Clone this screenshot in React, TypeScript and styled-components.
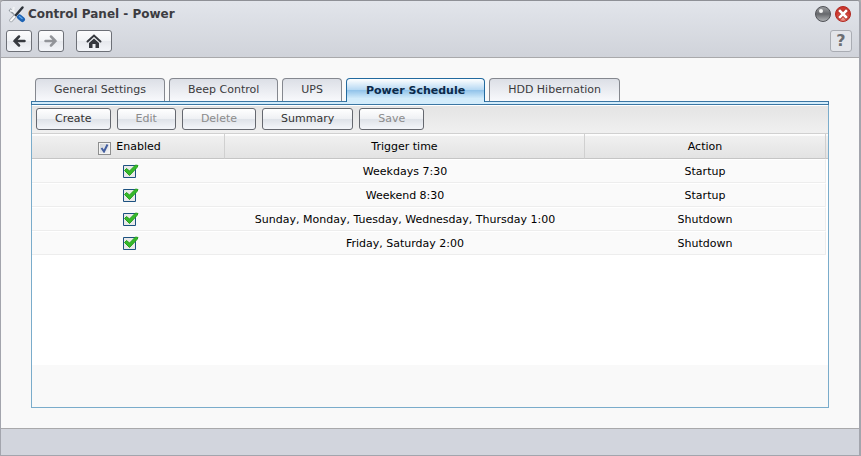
import React, { useState } from "react";
import styled, { createGlobalStyle, css } from "styled-components";

const GlobalStyle = createGlobalStyle`
  *, *::before, *::after { box-sizing: border-box; }
  body { margin: 0; background: #b0b0b2; }
  body, button, input, table { font-family: Verdana, "DejaVu Sans", sans-serif; }
`;

const Window = styled.div`
  display: flex;
  flex-direction: column;
  min-height: 100vh;
  border: 1px solid #a3a5ad;
  border-right-width: 2px;
  border-top-color: #8e9096;
  border-radius: 4px 4px 0 0;
  background: #f9f9f9;
  color: #333;
  overflow: hidden;
`;

const WindowHeader = styled.header`
  background: linear-gradient(#e2e5eb, #d0d3da);
  border-bottom: 1px solid #a9a9ab;
  height: 57px;
`;

const TitleBar = styled.div`
  display: flex;
  align-items: center;
  gap: 2px;
  height: 25px;
  padding: 0 7px;
`;

const Title = styled.h1`
  flex: 1;
  margin: 0;
  font-size: 12px;
  line-height: 16px;
  font-weight: bold;
  color: #3c3c41;
`;

const WindowButton = styled.button`
  display: flex;
  padding: 0;
  border: 0;
  background: none;
`;

const NavBar = styled.nav`
  display: flex;
  align-items: center;
  padding: 4px 7px 0 5px;
`;

const NavButton = styled.button<{ $wide?: boolean; $faint?: boolean }>`
  display: flex;
  align-items: center;
  justify-content: center;
  width: ${(p) => (p.$wide ? 36 : 26)}px;
  height: 22px;
  margin-right: ${(p) => (p.$wide ? 0 : 6)}px;
  padding: 0;
  border: 1px solid #6d7077;
  border-radius: 3px;
  background: linear-gradient(#fcfcfd, #f1f3f6 50%, #e6e8ed 50%, #f3f5f9);
  ${(p) => p.$wide && css`margin-left: 6px;`}
  ${(p) =>
    p.$faint &&
    css`
      width: 22px;
      margin: 0 0 0 auto;
      border-color: #a9acb3;
      background: #e3e5ea;
      color: #6c6e73;
      font: bold 16px/20px "DejaVu Sans", sans-serif;
    `}
`;

const Content = styled.main`
  display: flex;
  flex: 1;
  flex-direction: column;
  padding: 20px 30px;
`;

const TabList = styled.div`
  display: flex;
  gap: 4px;
  padding: 0 4px;
`;

const Tab = styled.button<{ $active: boolean }>`
  height: 23px;
  padding: 0 18px;
  border: 1px solid #85888f;
  border-bottom: 0;
  border-radius: 4px 4px 0 0;
  background: linear-gradient(#dcdfe6, #f8f9fc);
  color: #3a3a3c;
  font-size: 11px;
  line-height: 22px;
  white-space: nowrap;
  ${(p) =>
    p.$active &&
    css`
      z-index: 1;
      height: 24px;
      margin-bottom: -1px;
      padding: 0 19px;
      border-color: #226a9f;
      background: linear-gradient(#fff, #b5d8f3 48%, #93c4ea 50%, #d3ecfb 85%);
      color: #0b2a4a;
      font-weight: bold;
    `}
`;

const TabStrip = styled.div`
  height: 4px;
  border: 1px solid #3a76a3;
  background: #d3ecfb;
`;

const Panel = styled.section`
  display: flex;
  flex: 1;
  flex-direction: column;
  border: 1px solid #7aaccb;
  border-top: 0;
  background: #fff;
`;

const Toolbar = styled.div`
  display: flex;
  gap: 6px;
  padding: 2px 4px 3px;
  border-top: 1px solid #fff;
  border-bottom: 1px solid #d0d0d0;
  background: linear-gradient(#e4e4e4, #f0f0f0);
`;

const ToolButton = styled.button`
  height: 22px;
  padding: 0 18px;
  border: 1px solid #65686f;
  border-radius: 3px;
  background: linear-gradient(#fff, #eff1f4 48%, #dfe3e9 52%, #f4f6fa);
  color: #333;
  font-size: 11px;
  line-height: 20px;
  &:disabled { color: #8b8b8b; }
`;

const Schedule = styled.table`
  width: 100%;
  border-collapse: separate;
  border-spacing: 0;
  table-layout: fixed;
  color: #000;
  font-size: 11px;
  line-height: 14px;
  text-align: center;
`;

const Column = styled.col<{ $width?: number }>`
  width: ${(p) => (p.$width ? `${p.$width}px` : "auto")};
`;

const HeadCell = styled.th`
  height: 25px;
  padding: 2px 0 0;
  border-right: 1px solid #d0d0d0;
  border-bottom: 1px solid #c5c5c5;
  background: linear-gradient(#fff 0, #f9f9f9 2px, #f0f0f0 2px, #e3e3e3);
  font-weight: normal;
  &:first-child { padding-left: 3px; }
`;

const Gutter = styled(HeadCell)`
  border-right: 0;
`;

const Cell = styled.td`
  height: 24px;
  padding: 2px 0 0;
  border-top: 1px solid #fff;
  border-bottom: 1px solid #ededed;
  background: #fafafa;
  &:first-child { padding: 0 0 0 4px; }
  &:nth-child(3) { border-right: 1px solid #ededed; }
`;

const CheckLabel = styled.label`
  display: flex;
  align-items: center;
  justify-content: center;
  gap: 5px;
`;

const HeadCheck = styled.input`
  appearance: none;
  width: 13px;
  height: 13px;
  margin: 2px 0 0;
  border: 1px solid #8e8f8f;
  background: linear-gradient(135deg, #cdd1d6, #f8f8f8);
  box-shadow: inset 0 0 0 1px #f4f4f4;
  &:checked {
    background: url("data:image/svg+xml,%3Csvg xmlns='http://www.w3.org/2000/svg' viewBox='0 0 11 11'%3E%3Cpath d='M2.500 5l2.500 3.500L8.500 1.500' fill='none' stroke='%23445fa0' stroke-width='2'/%3E%3C/svg%3E"),
      linear-gradient(135deg, #cdd1d6, #f8f8f8);
  }
`;

const RowCheck = styled.input`
  appearance: none;
  display: block;
  width: 16px;
  height: 14px;
  margin: 0 auto;
  background: url("data:image/svg+xml,%3Csvg xmlns='http://www.w3.org/2000/svg' width='16' height='14'%3E%3Cpath d='M.5 1.500h12v12H.5z' fill='%23e9e9e9' stroke='%231c5180'/%3E%3C/svg%3E");
  &:checked {
    background: url("data:image/svg+xml,%3Csvg xmlns='http://www.w3.org/2000/svg' width='16' height='14'%3E%3Cpath d='M.5 1.500h12v12H.5z' fill='%23e9e9e9' stroke='%231c5180'/%3E%3Cpath d='M1.500 6.500L3.500 4.500 6.500 7 12.500 1 15 1.500 14 3.500 6.500 11.500z' fill='%2336b92a' stroke='%2325a01d'/%3E%3C/svg%3E");
  }
`;

const PanelFooter = styled.div`
  height: 42px;
  margin-top: auto;
  background: #f9f9f9;
`;

const StatusBar = styled.footer`
  height: 27px;
  border-top: 1px solid #a9a9ab;
  background: #d2d5dd;
`;

const ToolsIcon = () => (
  <svg width="18" height="18" viewBox="0 0 18 18" aria-hidden="true">
    <path d="M3 15.500L8 10" stroke="#9da3a9" strokeWidth="3.500" strokeLinecap="round" />
    <path d="M3 15.500L8 10" stroke="#f8f9fa" strokeWidth="2" strokeLinecap="round" />
    <path d="M1.500 4.500L4.500 7 12 13" fill="none" stroke="#959ca3" strokeWidth="3" />
    <path d="M2 5.500L5 6 6 2M5 6l6 6" fill="none" stroke="#f0f2f4" strokeWidth="2" />
    <path d="M8 10L14.500 2.500" stroke="#2d333a" strokeWidth="2.500" strokeLinecap="round" />
    <path d="M11.500 12l3 2.500" stroke="#1d63b4" strokeWidth="5" strokeLinecap="round" />
    <path d="M11.500 11.500l2.500 2" stroke="#5ca6ea" strokeWidth="1.500" strokeLinecap="round" />
  </svg>
);

const ArrowIcon = ({ color, back }: { color: string; back?: boolean }) => (
  <svg width="14" height="12" viewBox="0 0 14 12" aria-hidden="true">
    <path
      d={back ? "M12.500 6H2.500M7 1.500L2.500 6 7 10.500" : "M1.500 6h10M7 1.500L11.500 6 7 10.500"}
      fill="none"
      stroke={color}
      strokeWidth="2.500"
      strokeLinecap="round"
    />
  </svg>
);

const HomeIcon = () => (
  <svg width="16" height="14" viewBox="0 0 16 14" aria-hidden="true">
    <path d="M1.500 7.500L8 1.500l6.500 6" fill="none" stroke="#36393f" strokeWidth="2" strokeLinecap="round" />
    <path d="M3 9l5-4.500L13 9v5H9.500v-4h-3v4H3z" fill="#36393f" />
  </svg>
);

const MinimizeIcon = () => (
  <svg width="18" height="18" viewBox="0 0 18 18" aria-hidden="true">
    <defs>
      <linearGradient id="ball" x2="0" y2="1">
        <stop stopColor="#a0a2a5" />
        <stop offset=".5" stopColor="#66686c" />
        <stop offset="1" stopColor="#b5b7ba" />
      </linearGradient>
    </defs>
    <circle cx="9" cy="9" r="7.500" fill="url(#ball)" stroke="#505257" />
    <circle cx="7" cy="6" r="2" fill="#f5f5f5" />
  </svg>
);

const CloseIcon = () => (
  <svg width="18" height="18" viewBox="0 0 18 18" aria-hidden="true">
    <defs>
      <radialGradient id="close" cy=".8">
        <stop stopColor="#f0a093" />
        <stop offset="1" stopColor="#cf382f" />
      </radialGradient>
    </defs>
    <circle cx="9" cy="9" r="7.500" fill="url(#close)" stroke="#b02720" />
    <path d="M6 6l6 6M12 6l-6 6" stroke="#b83a31" strokeWidth="4.500" strokeLinecap="square" />
    <path d="M6 6l6 6M12 6l-6 6" stroke="#fff" strokeWidth="2.500" strokeLinecap="square" />
  </svg>
);

const tabs = ["General Settings", "Beep Control", "UPS", "Power Schedule", "HDD Hibernation"];

const actions = [
  { label: "Create", enabled: true },
  { label: "Edit", enabled: false },
  { label: "Delete", enabled: false },
  { label: "Summary", enabled: true },
  { label: "Save", enabled: false },
];

const entries = [
  { time: "Weekdays 7:30", action: "Startup" },
  { time: "Weekend 8:30", action: "Startup" },
  { time: "Sunday, Monday, Tuesday, Wednesday, Thursday 1:00", action: "Shutdown" },
  { time: "Friday, Saturday 2:00", action: "Shutdown" },
];

export default function App() {
  const [active, setActive] = useState("Power Schedule");
  return (
    <>
      <GlobalStyle />
      <Window>
        <WindowHeader>
          <TitleBar>
            <ToolsIcon />
            <Title>Control Panel - Power</Title>
            <WindowButton type="button" aria-label="Minimize"><MinimizeIcon /></WindowButton>
            <WindowButton type="button" aria-label="Close"><CloseIcon /></WindowButton>
          </TitleBar>
          <NavBar>
            <NavButton type="button" aria-label="Back"><ArrowIcon back color="#36393f" /></NavButton>
            <NavButton type="button" aria-label="Forward" disabled><ArrowIcon color="#929499" /></NavButton>
            <NavButton type="button" aria-label="Home" $wide><HomeIcon /></NavButton>
            <NavButton type="button" aria-label="Help" $faint>?</NavButton>
          </NavBar>
        </WindowHeader>
        <Content>
          <TabList role="tablist">
            {tabs.map((name) => (
              <Tab key={name} type="button" role="tab" aria-selected={name === active} $active={name === active} onClick={() => setActive(name)}>
                {name}
              </Tab>
            ))}
          </TabList>
          <TabStrip />
          <Panel role="tabpanel" aria-label={active}>
            <Toolbar>
              {actions.map((a) => (
                <ToolButton key={a.label} type="button" disabled={!a.enabled}>{a.label}</ToolButton>
              ))}
            </Toolbar>
            <Schedule>
              <colgroup>
                <Column $width={193} />
                <Column />
                <Column $width={241} />
                <Column $width={2} />
              </colgroup>
              <thead>
                <tr>
                  <HeadCell scope="col">
                    <CheckLabel><HeadCheck type="checkbox" defaultChecked />Enabled</CheckLabel>
                  </HeadCell>
                  <HeadCell scope="col">Trigger time</HeadCell>
                  <HeadCell scope="col">Action</HeadCell>
                  <Gutter as="td" />
                </tr>
              </thead>
              <tbody>
                {entries.map((e) => (
                  <tr key={e.time}>
                    <Cell><RowCheck type="checkbox" defaultChecked aria-label={`Enable ${e.time}`} /></Cell>
                    <Cell>{e.time}</Cell>
                    <Cell>{e.action}</Cell>
                  </tr>
                ))}
              </tbody>
            </Schedule>
            <PanelFooter />
          </Panel>
        </Content>
        <StatusBar />
      </Window>
    </>
  );
}
